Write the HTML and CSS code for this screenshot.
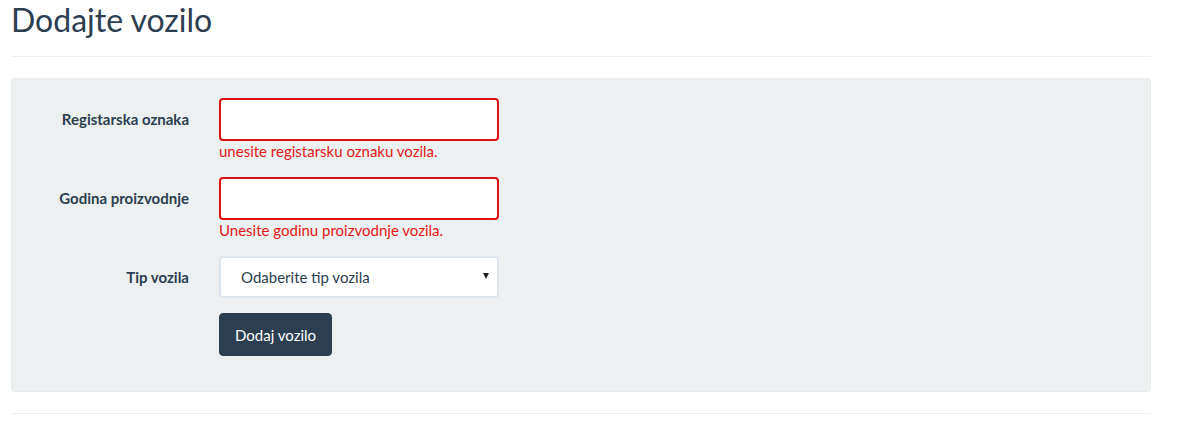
FILE: index.html
```html
<!DOCTYPE html>
<html lang="hr">
<head>
<meta charset="utf-8">
<title>Dodajte vozilo</title>
<link rel="stylesheet" href="styles.css">
</head>
<body>
<div class="page">
  <h1 class="title">Dodajte vozilo</h1>
  <hr class="rule">
  <form class="well">
    <div class="group">
      <label class="label" for="reg">Registarska oznaka</label>
      <div class="field">
        <input class="control error" id="reg" type="text">
        <span class="help">unesite registarsku oznaku vozila.</span>
      </div>
    </div>
    <div class="group">
      <label class="label" for="god">Godina proizvodnje</label>
      <div class="field">
        <input class="control error" id="god" type="text">
        <span class="help">Unesite godinu proizvodnje vozila.</span>
      </div>
    </div>
    <div class="group">
      <label class="label" for="tip">Tip vozila</label>
      <div class="field">
        <div class="select">
          <span class="select-text">Odaberite tip vozila</span>
          <span class="caret"></span>
        </div>
      </div>
    </div>
    <div class="group">
      <span></span>
      <div class="field">
        <button class="btn" type="button">Dodaj vozilo</button>
      </div>
    </div>
  </form>
  <hr class="rule bottom">
</div>
</body>
</html>
```

FILE: styles.css
```css
* { box-sizing: border-box; }
html, body { margin: 0; background: #fff; }
body {
  font-family: Lato, "Open Sans", "Liberation Sans", sans-serif;
  font-size: 15px;
  color: #2c3e50;
}
.page {
  width: 1140px;
  margin-left: 11px;
}
.title {
  margin: 0;
  padding-top: 2px;
  font-size: 32px;
  font-weight: 400;
  line-height: 36px;
  color: #2c3e50;
}
.rule {
  margin: 18px 0 21px;
  border: 0;
  border-top: 1px solid #ecf0f1;
  height: 0;
}
.rule.bottom { margin-top: 21px; }
.well {
  background: #ecf0f1;
  border: 1px solid #e6eaeb;
  border-radius: 4px;
  padding: 19px 19px 4px;
  min-height: 314px;
}
.group {
  display: grid;
  grid-template-columns: 158px 280px;
  column-gap: 30px;
  margin-bottom: 15px;
}
.label {
  text-align: right;
  font-weight: 700;
  font-size: 15px;
  line-height: 21px;
  padding-top: 11px;
}
.field { display: flex; flex-direction: column; align-items: flex-start; }
.control {
  width: 280px;
  height: 43px;
  border: 2px solid #dce4ec;
  border-radius: 4px;
  background: #fff;
  padding: 10px 15px;
  font: inherit;
  outline: none;
}
.control.error { border-color: #dd1111; }
.help {
  color: #e41818;
  font-size: 15px;
  line-height: 21px;
}
.select {
  width: 280px;
  height: 42px;
  border: 2px solid #dce4ec;
  border-radius: 4px;
  background: #fff;
  display: flex;
  align-items: center;
  justify-content: space-between;
  padding: 0 8px 0 20px;
  font-size: 15px;
}
.select-text { color: #2c3e50; }
.caret {
  width: 0; height: 0;
  border-left: 3.5px solid transparent;
  border-right: 3.5px solid transparent;
  border-top: 6px solid #222;
  margin-top: -3px;
}
.btn {
  background: #2c3e50;
  color: #fff;
  border: 1px solid #2c3e50;
  border-radius: 4px;
  height: 43px;
  padding: 0 15px;
  font-family: inherit;
  font-size: 15px;
}
```
